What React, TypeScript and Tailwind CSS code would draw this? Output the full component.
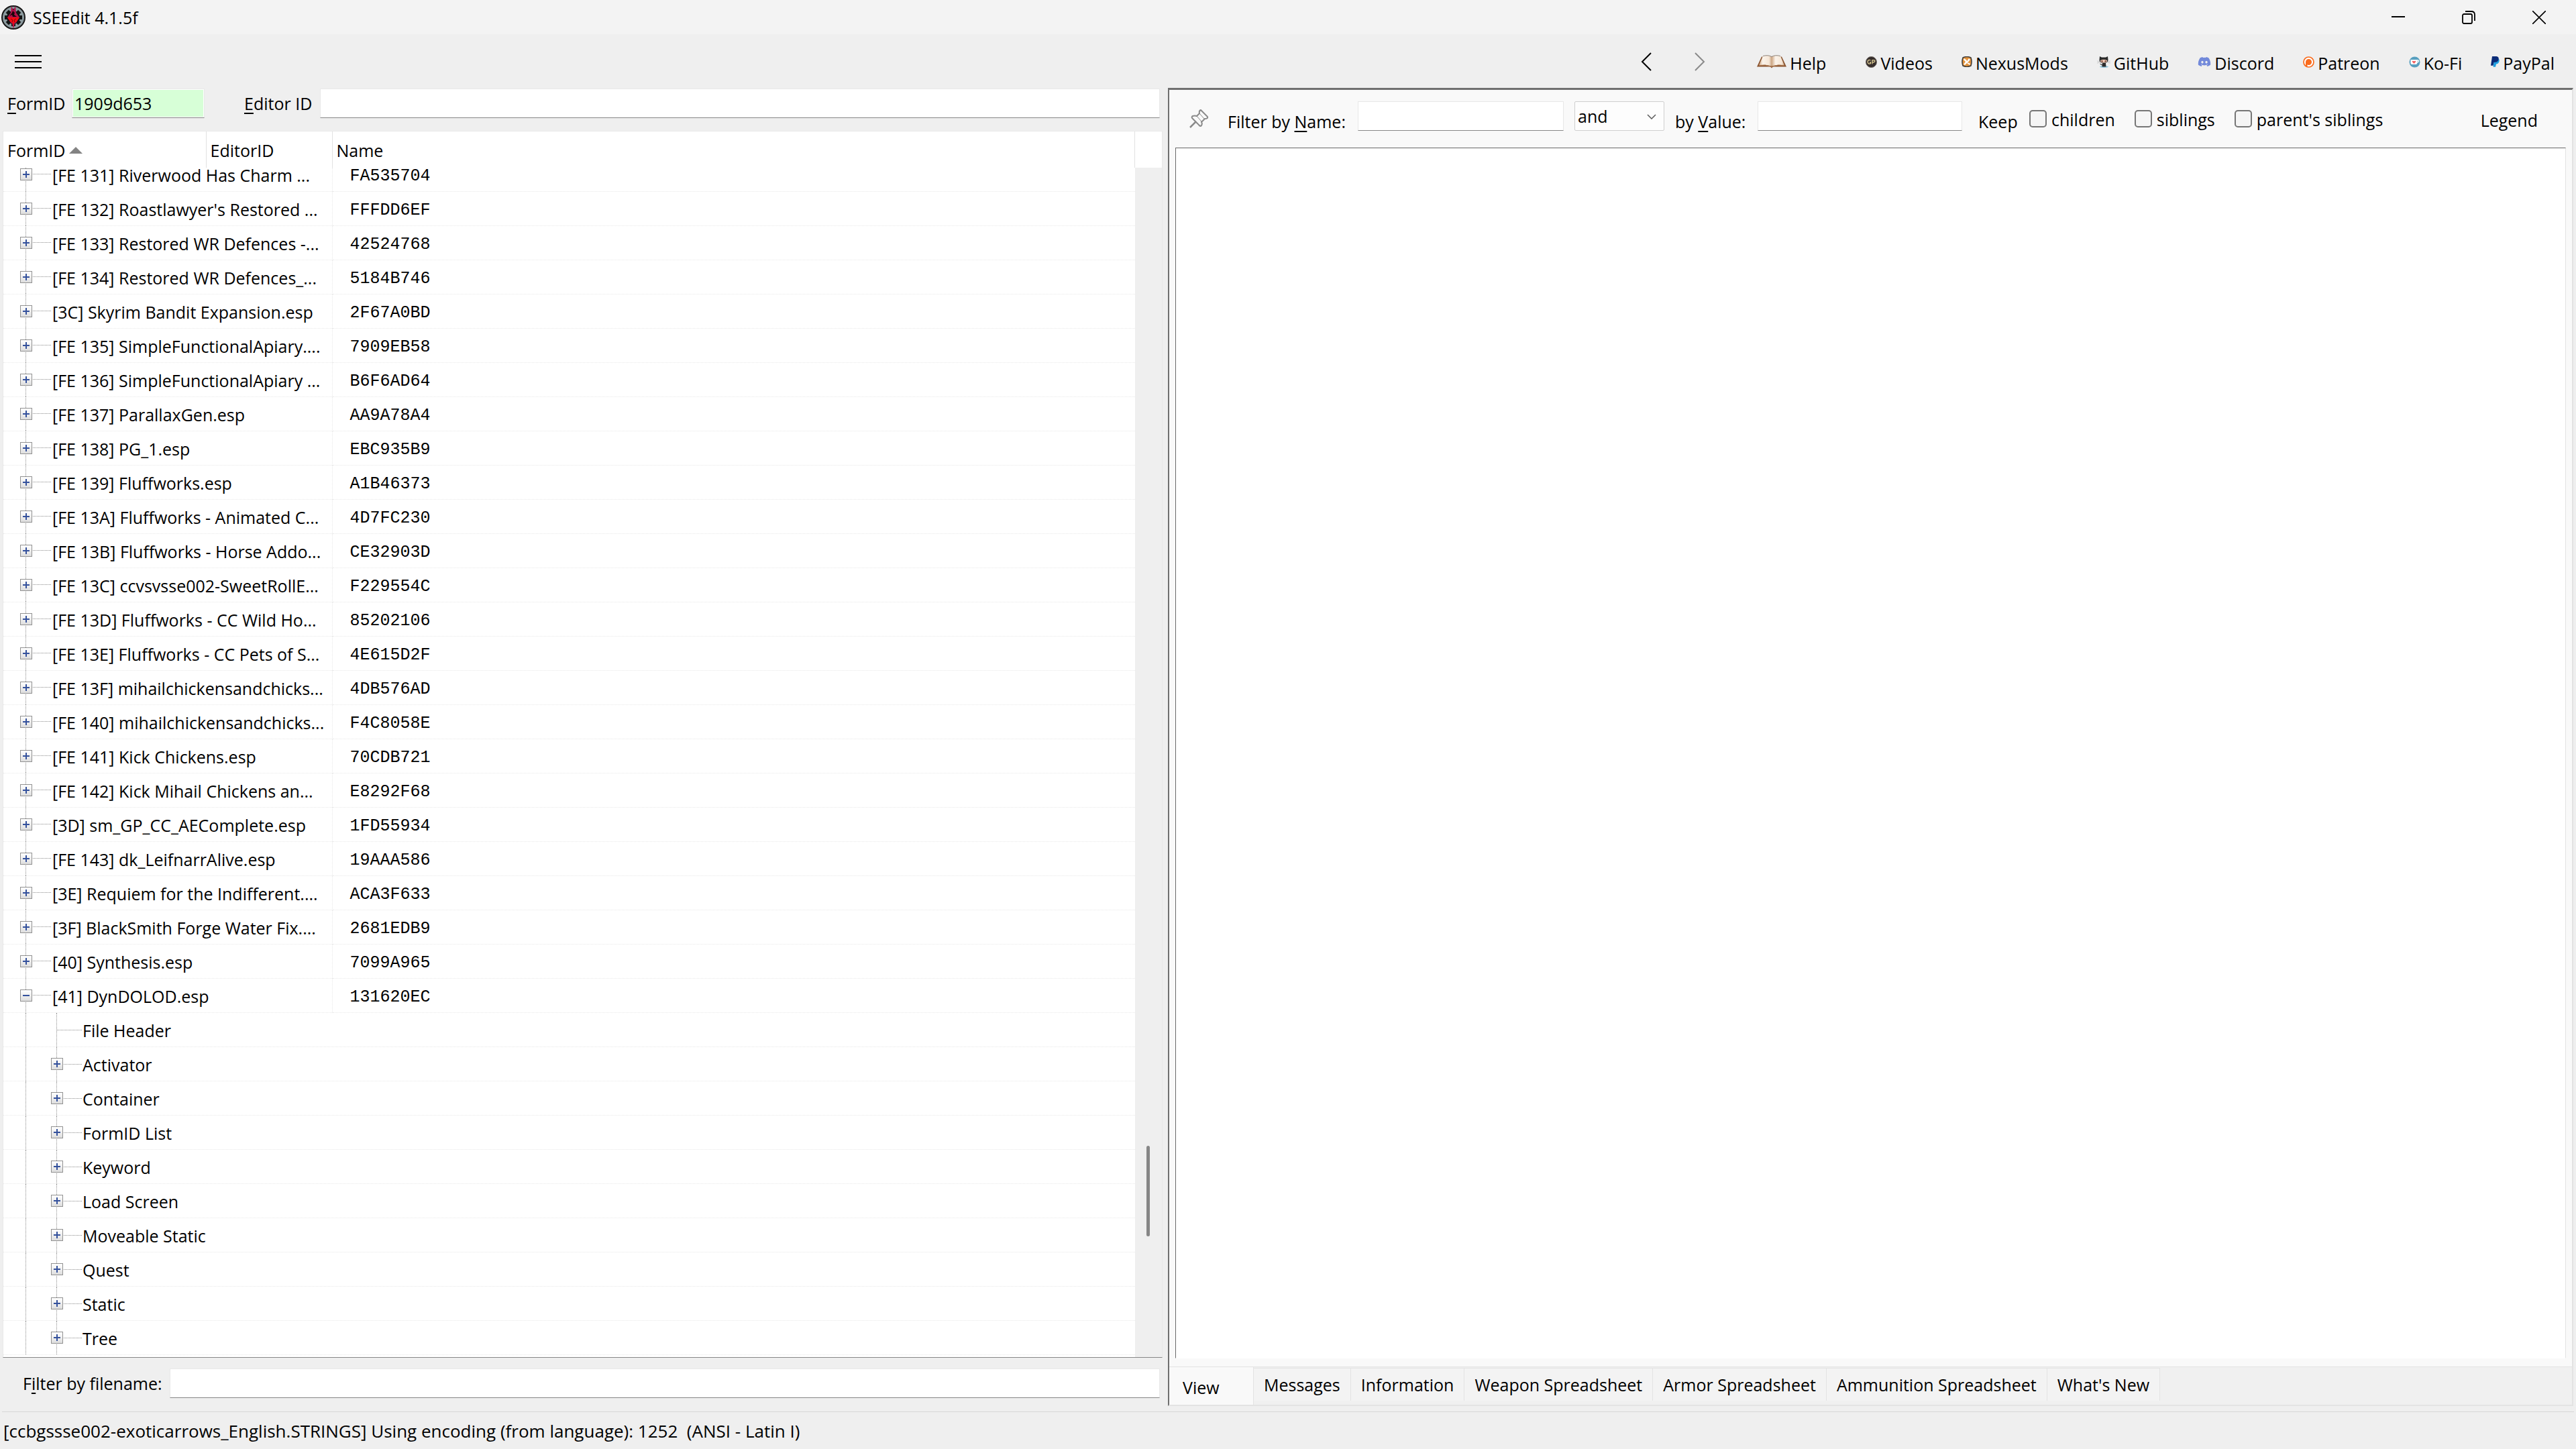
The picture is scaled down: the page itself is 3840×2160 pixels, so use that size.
import React, { useState } from 'react';
import { FaDiscord } from 'react-icons/fa';

interface PluginRow {
  label: string;
  crc: string;
  expanded?: boolean;
  children?: string[];
}

const PLUGINS: PluginRow[] = [
  { label: '[FE 131] Riverwood Has Charm ...', crc: 'FA535704' },
  { label: "[FE 132] Roastlawyer's Restored ...", crc: 'FFFDD6EF' },
  { label: '[FE 133] Restored WR Defences -...', crc: '42524768' },
  { label: '[FE 134] Restored WR Defences_...', crc: '5184B746' },
  { label: '[3C] Skyrim Bandit Expansion.esp', crc: '2F67A0BD' },
  { label: '[FE 135] SimpleFunctionalApiary....', crc: '7909EB58' },
  { label: '[FE 136] SimpleFunctionalApiary ...', crc: 'B6F6AD64' },
  { label: '[FE 137] ParallaxGen.esp', crc: 'AA9A78A4' },
  { label: '[FE 138] PG_1.esp', crc: 'EBC935B9' },
  { label: '[FE 139] Fluffworks.esp', crc: 'A1B46373' },
  { label: '[FE 13A] Fluffworks - Animated C...', crc: '4D7FC230' },
  { label: '[FE 13B] Fluffworks - Horse Addo...', crc: 'CE32903D' },
  { label: '[FE 13C] ccvsvsse002-SweetRollE...', crc: 'F229554C' },
  { label: '[FE 13D] Fluffworks - CC Wild Ho...', crc: '85202106' },
  { label: '[FE 13E] Fluffworks - CC Pets of S...', crc: '4E615D2F' },
  { label: '[FE 13F] mihailchickensandchicks...', crc: '4DB576AD' },
  { label: '[FE 140] mihailchickensandchicks...', crc: 'F4C8058E' },
  { label: '[FE 141] Kick Chickens.esp', crc: '70CDB721' },
  { label: '[FE 142] Kick Mihail Chickens an...', crc: 'E8292F68' },
  { label: '[3D] sm_GP_CC_AEComplete.esp', crc: '1FD55934' },
  { label: '[FE 143] dk_LeifnarrAlive.esp', crc: '19AAA586' },
  { label: '[3E] Requiem for the Indifferent....', crc: 'ACA3F633' },
  { label: '[3F] BlackSmith Forge Water Fix....', crc: '2681EDB9' },
  { label: '[40] Synthesis.esp', crc: '7099A965' },
  {
    label: '[41] DynDOLOD.esp',
    crc: '131620EC',
    expanded: true,
    children: [
      'File Header',
      'Activator',
      'Container',
      'FormID List',
      'Keyword',
      'Load Screen',
      'Moveable Static',
      'Quest',
      'Static',
      'Tree',
    ],
  },
];

const TABS = [
  'Messages',
  'Information',
  'Weapon Spreadsheet',
  'Armor Spreadsheet',
  'Ammunition Spreadsheet',
  "What's New",
];

// Scroll position of the tree, in pixels of its track
const SCROLL = { track: 1771, top: 1456, thumb: 135 };

const FIELD =
  'min-w-0 h-11 border border-[#e8e8e8] border-b-[#868686] bg-white px-1 outline-none';

const AppLogo = () => (
  <svg viewBox="0 0 36 36" className="w-9 h-9">
    <circle cx="18" cy="18" r="17" fill="#8b9a9e" stroke="#171717" strokeWidth="2" />
    <g fill="#141414">
      <circle cx="18" cy="18" r="10" />
      <rect x="15" y="5" width="6" height="26" />
      <rect x="5" y="15" width="26" height="6" />
      <rect x="15" y="5" width="6" height="26" transform="rotate(45 18 18)" />
      <rect x="15" y="5" width="6" height="26" transform="rotate(-45 18 18)" />
    </g>
    <path d="M15 1 L18 7 L21 1 L22 11 L27 18 L22 26 L20 27 L18 35 L16 27 L14 26 L9 18 L14 11Z" fill="#b3124a" />
    <path d="M9 18 L27 18 L22 25 L19 26 L18 31 L17 26 L14 25Z" fill="#f40b10" />
    <path d="M12 16 L16 11 L17 8 L20 11 L19 14 L23 17 L17 17 L16 14Z" fill="#190509" />
    <path d="M14 20 L17 22 L16 25 M22 20 L19 22 L20 25" fill="none" stroke="#7c0612" />
  </svg>
);

const BookIcon = () => (
  <svg viewBox="0 0 44 19" className="w-11 h-5">
    <defs>
      <linearGradient id="page" x1="0" y1="0" x2="1" y2="0">
        <stop offset="0" stopColor="#cfa884" />
        <stop offset="0.3" stopColor="#fbf3ea" />
        <stop offset="0.8" stopColor="#f5e6d6" />
        <stop offset="1" stopColor="#c9a382" />
      </linearGradient>
    </defs>
    <path d="M0 17 L7 2 L37 2 L44 17 L24 17 L22 19 L20 17Z" fill="#8a5531" />
    <path d="M3 15 L9 1 Q17 -1 22 2 L22 16 Q13 13 3 15Z" fill="url(#page)" />
    <path d="M41 15 L35 1 Q27 -1 22 2 L22 16 Q31 13 41 15Z" fill="url(#page)" />
    <path d="M9 1 Q17 -1 22 2 Q27 -1 35 1" fill="none" stroke="#8d8178" />
    <path d="M3 15 Q13 13 22 17 Q31 13 41 15" fill="none" stroke="#b07a50" />
  </svg>
);

const VideosIcon = () => (
  <svg viewBox="0 0 17 17" className="w-[17px] h-[17px]">
    <circle cx="8.5" cy="8.5" r="8" fill="#352d2b" stroke="#6d655f" />
    <path d="M7.5 6 Q5 4.500 3.500 6.500 Q2.500 9.500 4.500 11 Q6.500 11.500 7.500 10.500 L7.500 9 L6 9" fill="none" stroke="#dccb93" strokeWidth="1.300" />
    <path d="M10 11.500 L10 5.700 L12 5.700 Q14.500 6 13.500 8 Q12.500 9 10 8.700" fill="none" stroke="#dccb93" strokeWidth="1.300" />
  </svg>
);

const NexusIcon = () => (
  <svg viewBox="0 0 16 16" className="w-4 h-4">
    <path d="M2 2 Q8 -1 14 2 Q16 8 14 14 Q8 17 2 14 Q0 8 2 2Z" fill="#e3923a" stroke="#3c3a38" strokeWidth="1.500" />
    <path d="M4 3 L8 6 L11 3 L13 5 L10 8 L13 11 L12 13 L8 10 L5 13 L3 12 L6 8 L3 5Z" fill="#fff" />
    <path d="M8 7 L10 3 M9 9 L13 10" stroke="#e3923a" />
  </svg>
);

const GitHubIcon = () => (
  <svg viewBox="0 0 20 17" className="w-5 h-[17px]">
    <ellipse cx="10.500" cy="15.500" rx="6.500" ry="1.500" fill="#8fc4dc" />
    <path d="M0 7 L4 8 M0 10 L4 9 M20 7 L16 8 M20 10 L16 9" stroke="#b9b9b9" strokeWidth="0.700" />
    <path d="M4 0 L7 1.500 L13 1.500 L16 0 L16.500 5 Q17 10 10 10 Q3 10 3.500 5Z" fill="#2b2b2b" />
    <path d="M5 6 Q10 3.500 15 6 Q15.500 9.500 10 9.500 Q4.500 9.500 5 6Z" fill="#eec7b3" />
    <ellipse cx="7.500" cy="7.300" rx="1" ry="1.300" fill="#6b3a2c" />
    <ellipse cx="12.500" cy="7.300" rx="1" ry="1.300" fill="#6b3a2c" />
    <path d="M8 10 L13 10 L13.500 15.500 L7.500 15.500 L7.500 13 Q5 13 4 10.500 L6 11.500 L8 12Z" fill="#2b2b2b" />
  </svg>
);

const PatreonIcon = () => (
  <svg viewBox="0 0 17 17" className="w-[17px] h-[17px]">
    <circle cx="8.500" cy="8.500" r="7.500" fill="#fff" stroke="#f96b1c" strokeWidth="1.700" />
    <path d="M4 15 L4 8.500 A4.500 4.500 0 1 1 8.500 13 L6.500 12.500 L6.500 16Z" fill="#f96b1c" />
  </svg>
);

const KofiIcon = () => (
  <svg viewBox="0 0 17 17" className="w-[17px] h-[17px]">
    <circle cx="8.500" cy="8.500" r="8" fill="#579fbf" />
    <path d="M2.500 5 L12.500 5 Q15.500 5 15 7.500 Q14.500 9.500 12.500 9.500 Q12 12 10.500 12 L4.500 12 Q2.500 12 2.500 10Z" fill="#fff" />
    <path d="M7.500 11 L4.700 8 Q5 6 7.500 7.300 Q10 6 10.300 8Z" fill="#f15f5f" />
    <path d="M12.600 6.500 L12.600 8.200 Q13.800 8 13.800 7 Q13.600 6.400 12.600 6.500Z" fill="#579fbf" />
  </svg>
);

const PayPalIcon = () => (
  <svg viewBox="0 0 13 16" className="w-[13px] h-4">
    <path d="M5 5 L12 4 Q13.500 6 12 9 Q10.500 11.500 8 11.500 L7 15.800 L3.500 15.800Z" fill="#1f9fe0" />
    <path d="M2 0 L8.500 0 Q12 0.500 11.800 4 Q11 8.500 6.500 8.800 L4.500 9 L3.500 13.800 L0 13.800Z" fill="#0b2b78" />
  </svg>
);

const PinIcon = () => (
  <svg viewBox="0 0 29 29" className="w-[29px] h-[29px]" fill="none" stroke="#8a8a8a" strokeWidth="2">
    <path d="M17 1 L27 11 Q28 14 23 14 L18 19 Q20 22 17 25 Q15 25 14 23 L4 13 Q3 11 5 10 Q8 9 11 10 L15 6 Q14 2 17 1Z" />
    <path d="M10 18 L1 27" strokeWidth="2.500" />
    <path d="M15 6 L22 14 M11 10 L18 18" strokeWidth="1" />
  </svg>
);

const LINKS = [
  { name: 'Help', icon: <BookIcon />, space: 'mr-4' },
  { name: 'Videos', icon: <VideosIcon />, space: '' },
  { name: 'NexusMods', icon: <NexusIcon />, space: '' },
  { name: 'GitHub', icon: <GitHubIcon />, space: '' },
  { name: 'Discord', icon: <FaDiscord className="w-5 h-5 text-[#7289da]" />, space: '' },
  { name: 'Patreon', icon: <PatreonIcon />, space: '' },
  { name: 'Ko-Fi', icon: <KofiIcon />, space: '' },
  { name: 'PayPal', icon: <PayPalIcon />, space: '' },
];

const TitleBar = () => (
  <header className="flex h-[51px] shrink-0 items-center bg-[#f3f3f3] pl-0.5">
    <AppLogo />
    <h1 className="ml-[11px] flex-1">SSEEdit 4.1.5f</h1>
    <button aria-label="Minimize" className="flex h-full w-[105px] items-center justify-center">
      <svg viewBox="0 0 20 20" className="w-5 h-5">
        <path d="M0 9 H20" stroke="#000" strokeWidth="2" />
      </svg>
    </button>
    <button aria-label="Restore" className="flex h-full w-[105px] items-center justify-center">
      <svg viewBox="0 0 20 20" className="w-5 h-5" fill="none" stroke="#000" strokeWidth="1.800">
        <rect x="1" y="5" width="14" height="14" rx="2" />
        <path d="M5 1 H14 Q19 1 19 6 V15" />
      </svg>
    </button>
    <button aria-label="Close" className="mr-[3px] flex h-full w-[105px] items-center justify-center">
      <svg viewBox="0 0 20 20" className="w-5 h-5">
        <path d="M0 0 L20 20 M20 0 L0 20" stroke="#000" strokeWidth="1.600" />
      </svg>
    </button>
  </header>
);

const Toolbar = () => (
  <nav className="flex h-20 shrink-0 items-center pt-0.5 pr-8 pl-[22px]">
    <button aria-label="Menu">
      <svg viewBox="0 0 40 20" className="w-10 h-5">
        <path d="M0 1 H40 M0 10 H40 M0 19 H40" stroke="#000" strokeWidth="2" />
      </svg>
    </button>
    <div className="ml-auto flex items-center">
      <button aria-label="Back" className="mr-16">
        <svg viewBox="0 0 16 28" className="w-4 h-7" fill="none" stroke="#000" strokeWidth="2">
          <path d="M15 1 L2 14 L15 27" />
        </svg>
      </button>
      <button aria-label="Forward" className="mr-[77px]">
        <svg viewBox="0 0 16 28" className="w-4 h-7" fill="none" stroke="#8a8a8a" strokeWidth="2">
          <path d="M1 1 L14 14 L1 27" />
        </svg>
      </button>
      <div className="flex items-center gap-[43px]">
        {LINKS.map((link) => (
          <button key={link.name} className={`flex items-center gap-[5px] ${link.space}`}>
            {link.icon}
            <span className="pt-1">{link.name}</span>
          </button>
        ))}
      </div>
    </div>
  </nav>
);

interface GuideProps {
  toggle?: 'plus' | 'minus';
  branch?: boolean;
}

const Guide: React.FC<GuideProps> = ({ toggle, branch }) => (
  <span className="relative flex h-full w-[46px] shrink-0 items-center justify-center">
    <span className="absolute inset-y-0 left-[22px] border-l border-dotted border-[#8c8c8c]" />
    {branch && (
      <span className="absolute top-[25px] right-[-14px] left-[23px] border-t border-dotted border-[#8c8c8c]" />
    )}
    {toggle && (
      <button
        aria-label={toggle === 'plus' ? 'Expand' : 'Collapse'}
        className="relative flex h-[18px] w-[18px] items-center justify-center border border-[#919191] bg-linear-to-b from-white to-[#dedede]"
      >
        <svg viewBox="0 0 10 10" className="w-2.5 h-2.5" stroke="#34519c" strokeWidth="2">
          <path d={toggle === 'plus' ? 'M0 5 H10 M5 0 V10' : 'M0 5 H10'} />
        </svg>
      </button>
    )}
  </span>
);

const PluginTree = () => (
  <table className="w-full table-fixed border-collapse text-left">
    <colgroup>
      <col className="w-[302px]" />
      <col className="w-[188px]" />
      <col />
    </colgroup>
    <thead className="relative z-10 bg-white">
      <tr className="h-[54px]">
        <th className="border-r border-[#e2e2e2] pl-1.5 font-normal">
          <span className="flex items-center gap-1.5 pt-0.5">
            FormID
            <svg viewBox="0 0 20 10" className="w-5 h-2.5">
              <path d="M10 0 L20 10 H0Z" fill="#838383" />
            </svg>
          </span>
        </th>
        <th className="border-r border-[#e2e2e2] pt-0.5 pl-1.5 font-normal">EditorID</th>
        <th className="border-r border-[#e2e2e2] pt-0.5 pl-1.5 font-normal">Name</th>
      </tr>
    </thead>
    <tbody>
      {PLUGINS.map((plugin, index) => {
        // the first row is partly scrolled under the header
        const box = index === 0 ? 'h-[36px]' : 'h-[51px]';
        return (
          <React.Fragment key={plugin.label}>
            <tr>
              <td colSpan={2} className="border-r border-dotted border-[#e9e9e9] p-0">
                <div className={`flex flex-col justify-end border-b border-dotted border-[#e9e9e9] ${box}`}>
                  <div className="flex h-[51px] shrink-0 items-center pl-[11px] whitespace-nowrap">
                    <Guide branch toggle={plugin.expanded ? 'minus' : 'plus'} />
                    <span className="ml-4 pt-0.5 leading-5">{plugin.label}</span>
                  </div>
                </div>
              </td>
              <td className="p-0">
                <div className={`flex flex-col justify-end border-b border-dotted border-[#e9e9e9] ${box}`}>
                  <div className="flex h-[51px] shrink-0 items-center pt-1.5 pl-[26px] font-['Liberation_Mono',monospace] leading-5">
                    {plugin.crc}
                  </div>
                </div>
              </td>
            </tr>
            {plugin.children?.map((child, childIndex) => (
              <tr key={child}>
                <td colSpan={3} className="p-0">
                  <div className="flex h-[51px] items-center border-b border-dotted border-[#e9e9e9] pl-[11px] whitespace-nowrap">
                    <Guide />
                    <Guide branch toggle={childIndex === 0 ? undefined : 'plus'} />
                    <span className="ml-[15px] pt-0.5 leading-5">{child}</span>
                  </div>
                </td>
              </tr>
            ))}
          </React.Fragment>
        );
      })}
    </tbody>
  </table>
);

const ScrollBar = () => (
  <div className="flex w-10 shrink-0 flex-col pt-[54px]">
    <div className="relative flex-1 bg-[#efefef]">
      <div
        className="absolute left-[17px] w-[5px] rounded-full bg-[#868686]"
        style={{
          top: `${(SCROLL.top / SCROLL.track) * 100}%`,
          height: `${(SCROLL.thumb / SCROLL.track) * 100}%`,
        }}
      />
    </div>
  </div>
);

const NavigationPane = () => {
  const [formId, setFormId] = useState('1909d653');

  return (
    <section className="flex min-h-0 min-w-0 flex-col pt-px">
      <div className="flex items-center pr-3 pl-[11px]">
        <label htmlFor="form-id" className="w-24 shrink-0">
          <u className="underline-offset-4">F</u>ormID
        </label>
        <input
          id="form-id"
          value={formId}
          onChange={(e) => setFormId(e.target.value)}
          className="h-11 w-[198px] border border-[#e8e8e8] border-b-[#868686] bg-[#d7ffd7] px-[3px] shadow-[inset_0_0_0_1px_#fff] outline-none"
        />
        <label htmlFor="editor-id" className="ml-[59px] w-[113px] shrink-0">
          <u className="underline-offset-4">E</u>ditor ID
        </label>
        <input id="editor-id" className={`${FIELD} flex-1`} />
      </div>

      <div className="mt-[19px] mr-2 ml-1 flex min-h-0 flex-1 items-stretch border border-[#e8e8e8] border-b-[#868686] bg-white">
        <div className="min-w-0 flex-1">
          <PluginTree />
        </div>
        <ScrollBar />
      </div>

      <div className="flex items-center pt-4 pr-3 pb-5 pl-[34px]">
        <label htmlFor="file-filter" className="w-[219px] shrink-0 whitespace-nowrap">
          F<u className="underline-offset-4">i</u>lter by filename:
        </label>
        <input id="file-filter" className={`${FIELD} flex-1`} />
      </div>
    </section>
  );
};

const KeepOption: React.FC<{ id: string; label: string }> = ({ id, label }) => (
  <div className="flex items-center gap-[7px]">
    <input
      id={id}
      type="checkbox"
      className="h-[26px] w-[26px] appearance-none rounded-[5px] border-2 border-[#767676] bg-[#f5f5f5]"
    />
    <label htmlFor={id} className="pt-0.5 whitespace-nowrap">{label}</label>
  </div>
);

const ViewPane = () => (
  <section className="mr-1 mb-2 flex min-h-0 min-w-0 flex-col border-2 border-t-[3px] border-[#e3e3e3] border-t-[#6f6f6f] border-l-[#6f6f6f] bg-[#f9f9f9]">
    <div className="flex h-[86px] shrink-0 items-start pt-[17px] pr-[51px] pl-[30px]">
      <button aria-label="Pin" className="mt-3">
        <PinIcon />
      </button>
      <label htmlFor="filter-name" className="mt-3 ml-7 w-[194px] shrink-0 whitespace-nowrap">
        Filter by <u className="underline-offset-4">N</u>ame:
      </label>
      <input id="filter-name" className={`${FIELD} w-[307px]`} />
      <div className="relative ml-4">
        <select
          aria-label="Filter operator"
          className="h-11 w-[134px] appearance-none rounded-xs border border-[#cfcfcf] bg-[#fdfdfd] pl-1 outline-none"
        >
          <option>and</option>
          <option>or</option>
        </select>
        <svg viewBox="0 0 14 8" className="pointer-events-none absolute top-[19px] right-3 w-3.5 h-2" fill="none" stroke="#5c5c5c" strokeWidth="1.500">
          <path d="M1 1 L7 7 L13 1" />
        </svg>
      </div>
      <label htmlFor="filter-value" className="mt-3 ml-4 w-[123px] shrink-0 whitespace-nowrap">
        by <u className="underline-offset-4">V</u>alue:
      </label>
      <input id="filter-value" className={`${FIELD} w-[305px]`} />
      <span className="mt-3 ml-6 w-[76px]">Keep</span>
      <div className="mt-[7px] flex gap-[29px]">
        <KeepOption id="keep-children" label="children" />
        <KeepOption id="keep-siblings" label="siblings" />
        <KeepOption id="keep-parents" label="parent's siblings" />
      </div>
      <button className="mt-2.5 ml-auto">Legend</button>
    </div>

    <div className="mr-[9px] ml-[9px] min-h-0 flex-1 border border-[#e3e3e3] border-t-[#696969] border-l-[#696969] border-b-white bg-white" />

    <div className="mt-3 flex h-[57px] shrink-0 items-start border-t border-[#e3e3e3] bg-[#f0f0f0]">
      <button className="h-full w-[126px] border-r border-[#e3e3e3] bg-[#f9f9f9] pt-1 pl-5 text-left">View</button>
      {TABS.map((tab) => (
        <button key={tab} className="mt-px h-[49px] border-t border-r border-[#e3e3e3] bg-[#f3f3f3] px-[15px] whitespace-nowrap">
          {tab}
        </button>
      ))}
    </div>
  </section>
);

export default function App() {
  return (
    <div className="flex h-screen w-full flex-col overflow-hidden bg-[#efefef] font-['Open_Sans','Noto_Sans',sans-serif] text-[25px] leading-9 text-black">
      <TitleBar />
      <Toolbar />
      <main className="grid min-h-0 flex-1 grid-cols-[1741fr_2099fr] grid-rows-1">
        <NavigationPane />
        <ViewPane />
      </main>
      <footer className="mx-[3px] flex h-14 shrink-0 items-center border-t border-[#d7d7d7] pl-0.5 text-[26px] whitespace-pre">
        [ccbgssse002-exoticarrows_English.STRINGS] Using encoding (from language): 1252  (ANSI - Latin I)
      </footer>
    </div>
  );
}
